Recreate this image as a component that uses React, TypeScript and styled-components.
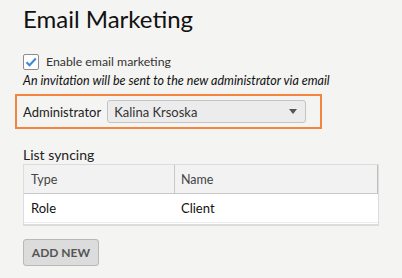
import React from "react";
import styled, { createGlobalStyle } from "styled-components";

const Global = createGlobalStyle`
  html, body { margin: 0; padding: 0; background: #f4f4f2; }
  body { font-family: Lato, "Open Sans", sans-serif; color: #222; }
`;

const Page = styled.div`
  padding: 3px 24px 0 23px;
  display: flex;
  flex-direction: column;
`;

const Title = styled.h1`
  margin: 0;
  font-size: 24px;
  font-weight: 400;
  line-height: 32px;
  color: #111;
`;

const CheckRow = styled.label`
  margin-top: 18px;
  display: flex;
  align-items: center;
  gap: 7px;
  font-size: 12.3px;
  line-height: 17px;
  color: #333;
`;

const Box = styled.span`
  width: 14px;
  height: 14px;
  border: 1px solid #8c8c8c;
  border-radius: 2px;
  background: #fff;
  display: flex;
  align-items: center;
  justify-content: center;
`;

const Note = styled.div`
  margin-top: 3px;
  font-size: 12.5px;
  font-style: italic;
  line-height: 16px;
  color: #111;
`;

const Highlight = styled.div`
  margin: 5px 0 0 -8px;
  width: 307px;
  height: 35px;
  box-sizing: border-box;
  border: 2.5px solid #f5843f;
  display: flex;
  align-items: center;
  padding-left: 6px;
  gap: 6px;
`;

const FieldLabel = styled.span`
  font-size: 13px;
  color: #222;
`;

const Select = styled.div`
  width: 199px;
  height: 23px;
  box-sizing: border-box;
  border: 1px solid #c4c4c4;
  border-radius: 3px;
  background: #ececec;
  display: flex;
  align-items: center;
  justify-content: space-between;
  padding: 0 8px 0 6px;
  font-size: 13px;
  color: #333;
`;

const Caret = styled.span`
  width: 0;
  height: 0;
  border-left: 4.5px solid transparent;
  border-right: 4.5px solid transparent;
  border-top: 5px solid #555;
`;

const SectionTitle = styled.div`
  margin-top: 17px;
  font-size: 14px;
  line-height: 18px;
  color: #222;
`;

const Table = styled.div`
  width: 356px;
  box-sizing: border-box;
  border: 1px solid #dcdcdc;
  background: #fff;
  padding-bottom: 1px;
  border-bottom-width: 2px;
`;

const Row = styled.div<{ $head?: boolean }>`
  display: grid;
  grid-template-columns: 150px 1fr;
  height: 28px;
  background: ${(p) => (p.$head ? "#f2f2f2" : "#fff")};
  border-bottom: 1px solid ${(p) => (p.$head ? "#c8c8c8" : "#ececec")};
  border-right: ${(p) => (p.$head ? "1px solid #c0c0c0" : "none")};
  font-size: ${(p) => (p.$head ? 12.5 : 13)}px;
  color: ${(p) => (p.$head ? "#444" : "#111")};
`;

const Cell = styled.div<{ $divider?: boolean }>`
  display: flex;
  align-items: center;
  padding-left: ${(p) => (p.$divider ? 6 : 7)}px;
  border-left: ${(p) => (p.$divider ? "1px solid #c8c8c8" : "none")};
`;

const Button = styled.button`
  margin-top: 13px;
  align-self: flex-start;
  width: 76px;
  height: 27px;
  box-sizing: border-box;
  border: 1px solid #b8b8b8;
  border-radius: 3px;
  background: #dcdcdc;
  font-family: inherit;
  font-size: 12px;
  font-weight: 700;
  color: #555;
  padding: 0;
`;

export default function App() {
  return (
    <>
      <Global />
      <Page>
        <Title>Email Marketing</Title>
        <CheckRow>
          <Box>
            <svg width="12" height="10" viewBox="0 0 12 10">
              <path d="M1.5 5.2 L4.5 8.2 L10.8 1.5" fill="none" stroke="#3d86d8" strokeWidth="2" />
            </svg>
          </Box>
          Enable email marketing
        </CheckRow>
        <Note>An invitation will be sent to the new administrator via email</Note>
        <Highlight>
          <FieldLabel>Administrator</FieldLabel>
          <Select>
            Kalina Krsoska
            <Caret />
          </Select>
        </Highlight>
        <SectionTitle>List syncing</SectionTitle>
        <Table>
          <Row $head>
            <Cell>Type</Cell>
            <Cell $divider>Name</Cell>
          </Row>
          <Row>
            <Cell>Role</Cell>
            <Cell>Client</Cell>
          </Row>
        </Table>
        <Button>ADD NEW</Button>
      </Page>
    </>
  );
}
